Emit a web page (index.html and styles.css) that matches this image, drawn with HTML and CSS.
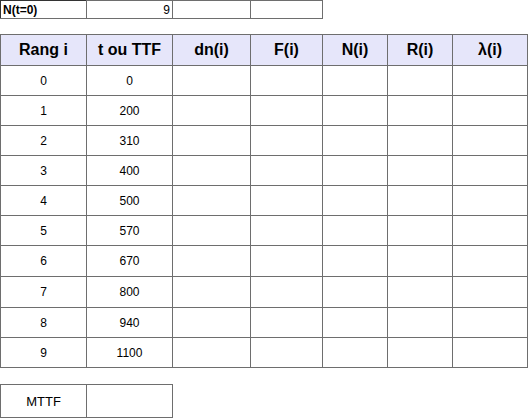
FILE: index.html
```html
<!DOCTYPE html>
<html>
<head>
<meta charset="utf-8">
<link rel="stylesheet" href="styles.css">
</head>
<body>
<table class="grid top">
  <colgroup><col class="c1"><col class="c2"><col class="c3"><col class="c4"></colgroup>
  <tr><td class="lbl">N(t=0)</td><td class="num">9</td><td></td><td></td></tr>
</table>

<table class="grid main">
  <colgroup><col class="c1"><col class="c2"><col class="c3"><col class="c4"><col class="c5"><col class="c6"><col class="c7"></colgroup>
  <thead>
    <tr><th>Rang i</th><th>t ou TTF</th><th>dn(i)</th><th>F(i)</th><th>N(i)</th><th>R(i)</th><th>λ(i)</th></tr>
  </thead>
  <tbody>
    <tr><td>0</td><td>0</td><td></td><td></td><td></td><td></td><td></td></tr>
    <tr><td>1</td><td>200</td><td></td><td></td><td></td><td></td><td></td></tr>
    <tr><td>2</td><td>310</td><td></td><td></td><td></td><td></td><td></td></tr>
    <tr><td>3</td><td>400</td><td></td><td></td><td></td><td></td><td></td></tr>
    <tr><td>4</td><td>500</td><td></td><td></td><td></td><td></td><td></td></tr>
    <tr><td>5</td><td>570</td><td></td><td></td><td></td><td></td><td></td></tr>
    <tr class="tall"><td>6</td><td>670</td><td></td><td></td><td></td><td></td><td></td></tr>
    <tr class="tall"><td>7</td><td>800</td><td></td><td></td><td></td><td></td><td></td></tr>
    <tr><td>8</td><td>940</td><td></td><td></td><td></td><td></td><td></td></tr>
    <tr><td>9</td><td>1100</td><td></td><td></td><td></td><td></td><td></td></tr>
  </tbody>
</table>

<table class="grid mttf">
  <colgroup><col class="c1"><col class="c2"></colgroup>
  <tr><td>MTTF</td><td></td></tr>
</table>
</body>
</html>
```

FILE: styles.css
```css
html, body {
  margin: 0;
  padding: 0;
  background: #ffffff;
}
body {
  font-family: "Liberation Sans", Arial, sans-serif;
  color: #000;
}
.grid {
  border-collapse: collapse;
  table-layout: fixed;
}
.grid td, .grid th {
  border: 1px solid #6e6e6e;
  padding: 0 3px;
  overflow: hidden;
  white-space: nowrap;
}
.grid .c1 { width: 86px; }
.grid .c2 { width: 86px; }
.grid .c3 { width: 78px; }
.grid .c4 { width: 72px; }
.grid .c5 { width: 65px; }
.grid .c6 { width: 65px; }
.grid .c7 { width: 75px; }

.top {
  width: 323px;
  border: 1px solid #333;
}
.top td {
  height: 17px;
  font-size: 12px;
  line-height: 14px;
  padding: 0 2px;
}
.top .lbl {
  font-weight: bold;
  text-align: left;
  border-left: 1px solid #333;
  border-top: 1px solid #333;
}
.top .num {
  text-align: right;
}

.main {
  width: 528px;
  margin-top: 15px;
  border: 1px solid #333;
}
.main th {
  height: 30px;
  background: #e6e6fa;
  font-size: 16px;
  font-weight: bold;
  text-align: center;
}
.main td {
  height: 29px;
  font-size: 12px;
  text-align: center;
}
.main tr.tall td {
  height: 30px;
}

.mttf {
  width: 173px;
  margin-top: 16px;
  border: 1px solid #333;
}
.mttf td {
  height: 32px;
  font-size: 13px;
  text-align: center;
}
```
